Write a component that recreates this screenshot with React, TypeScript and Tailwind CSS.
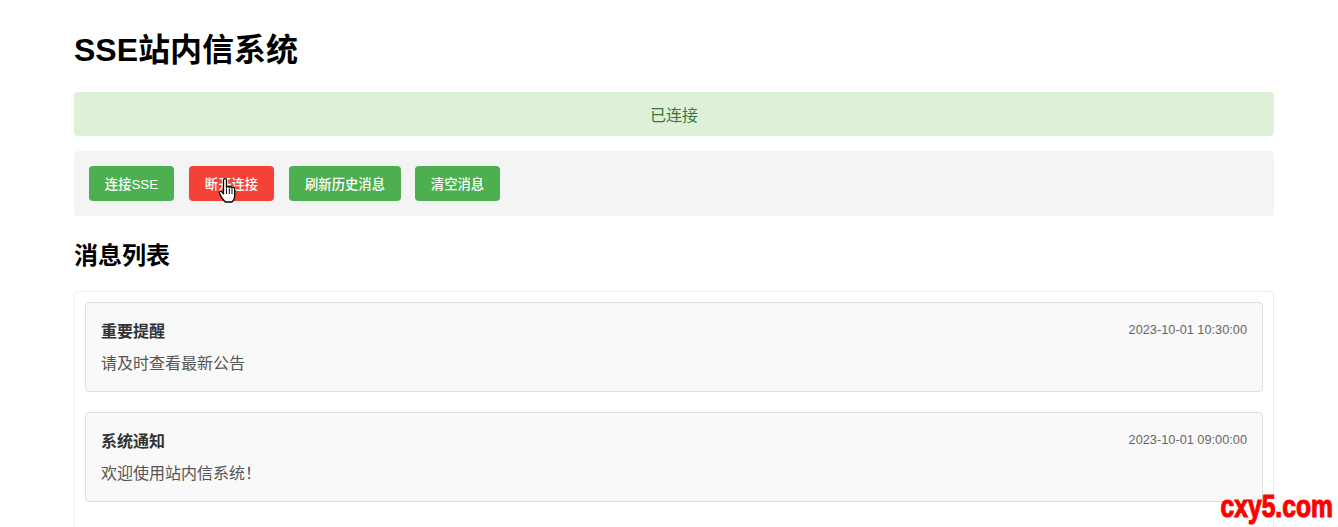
const font = "font-['Liberation_Sans','Noto_Sans_CJK_SC',sans-serif]";

const buttons = [
  { label: "连接SSE", color: "bg-[#4caf50]", size: "w-[85px]" },
  { label: "断开连接", color: "bg-[#f44336]", size: "w-[85px]" },
  { label: "刷新历史消息", color: "bg-[#4caf50]", size: "w-[112px]" },
  { label: "清空消息", color: "bg-[#4caf50] -ml-px", size: "w-[85px]" },
];

const messages = [
  { title: "重要提醒", time: "2023-10-01 10:30:00", body: "请及时查看最新公告" },
  { title: "系统通知", time: "2023-10-01 09:00:00", body: "欢迎使用站内信系统！" },
];

const HandCursor = () => (
  <svg
    className="absolute left-[29px] top-[12px]"
    width="19"
    height="26"
    viewBox="0 0 19 26"
  >
    <path
      d="M5.500 2c0-1.800 3-1.800 3 0v7.500c.3-1.400 2.700-1.400 2.800.2.300-1.200 2.600-1.100 2.700.4.500-1.100 2.600-.9 2.700.6v6.300c0 3.200-1.200 5.800-2.800 7H7.500c-1.500-1.100-5-6.500-6-8.600-.8-1.700 1.100-2.900 2.400-1.500l1.600 1.800z"
      fill="#fff"
      stroke="#000"
      strokeWidth="1.300"
      strokeLinejoin="round"
    />
    <path d="M8.500 10.500v5.500M11.300 10.500v5.500M14 11v5" stroke="#000" strokeWidth="1" fill="none" />
  </svg>
);

export default function App() {
  return (
    <div className={`h-screen overflow-hidden bg-white pl-[74px] ${font}`}>
      <div className="w-[1200px]">
        <h1 className="pt-[27px] text-[32px] leading-[46px] font-bold text-black">SSE站内信系统</h1>

        <div className="mt-[19px] flex h-[44px] items-center justify-center rounded bg-[#dff0d8] pt-[3px] text-[16px] text-[#3c763d]">
          已连接
        </div>

        <div className="mt-[15px] flex h-[65px] items-center gap-[15px] rounded bg-[#f4f4f4] px-[15px]">
          {buttons.map((b, i) => (
            <button
              key={b.label}
              className={`relative h-[35px] rounded pt-[2px] text-center text-[13.33px] font-medium text-white ${b.size} ${b.color}`}
            >
              {b.label}
              {i === 1 && <HandCursor />}
            </button>
          ))}
        </div>

        <h2 className="mt-[24px] text-[24px] leading-[32px] font-bold text-black">消息列表</h2>

        <div className="mt-[19px] flex h-[400px] flex-col gap-5 rounded border border-[#eeeeee] p-[10px]">
          {messages.map((m) => (
            <div key={m.title} className="h-[90px] rounded border border-[#dddddd] bg-[#f9f9f9] px-[15px] pt-[16px]">
              <div className="flex items-start justify-between">
                <span className="text-[16px] leading-[26px] font-bold text-[#333333]">{m.title}</span>
                <span className="text-[12.75px] leading-[22px] text-[#666666]">{m.time}</span>
              </div>
              <p className="mt-[6px] text-[16px] leading-[26px] text-[#555555]">{m.body}</p>
            </div>
          ))}
        </div>
      </div>

      <div className="absolute right-[5px] top-[486px] origin-right scale-x-[0.77] text-[32px] leading-[40px] font-bold text-[#ff0000] [-webkit-text-stroke:1.2px_#ff0000]">
        cxy5.com
      </div>
    </div>
  );
}
